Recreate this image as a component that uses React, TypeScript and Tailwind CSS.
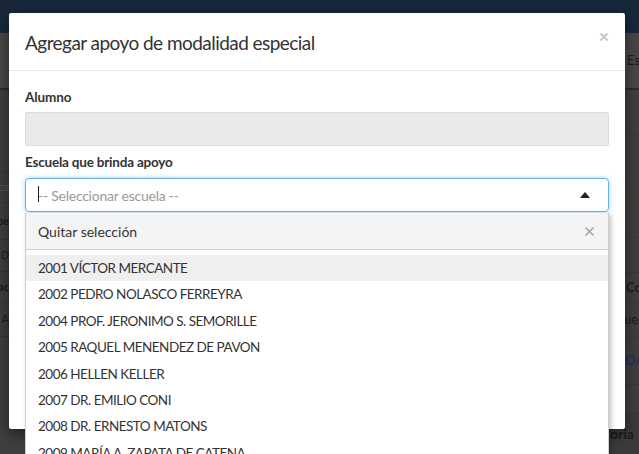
import React from "react";

const schools = [
  "2001 VÍCTOR MERCANTE",
  "2002 PEDRO NOLASCO FERREYRA",
  "2004 PROF. JERONIMO S. SEMORILLE",
  "2005 RAQUEL MENENDEZ DE PAVON",
  "2006 HELLEN KELLER",
  "2007 DR. EMILIO CONI",
  "2008 DR. ERNESTO MATONS",
  "2009 MARÍA A. ZAPATA DE CATENA",
];

export default function App() {
  return (
    <div
      className="relative w-[639px] h-[454px] overflow-hidden bg-[#3f3f3f]"
      style={{ fontFamily: "Lato, 'Liberation Sans', sans-serif" }}
    >
      {/* Background page (dimmed) */}
      <div className="flex flex-col h-full">
        <div className="h-[33px] bg-[#17283a] shrink-0" />
        <div className="flex flex-1">
          {/* left strip */}
          <div className="w-[9px] flex flex-col text-[11px] text-[#1c1c1c]">
            <div className="h-[57px] bg-[#474747] border-b-2 border-[#222c36]" />
            <div className="h-[82px] border-b border-[#383838]" />
            <div className="h-[31px] flex items-center justify-end border-b border-[#383838] text-[#5a5a5a] whitespace-nowrap">
              ca
            </div>
            <div className="h-[37px] flex items-center justify-end border-b border-[#383838] font-bold whitespace-nowrap">
              pe
            </div>
            <div className="h-[32px] flex items-center justify-end border-b border-[#383838] whitespace-nowrap">
              D
            </div>
            <div className="h-[31px] flex items-center justify-end border-b border-[#383838] font-bold whitespace-nowrap">
              ac
            </div>
            <div className="h-[34px] flex items-center justify-end border-b border-[#383838] whitespace-nowrap">
              A
            </div>
            <div className="flex-1" />
          </div>
          <div className="flex-1" />
          {/* right strip */}
          <div className="w-[29px] flex flex-col text-[13px] text-[#1c1c1c]">
            <div className="h-[57px] bg-[#474747] border-b-2 border-[#222c36] flex items-center pl-[17px] whitespace-nowrap">
              Es
            </div>
            <div className="h-[45px] border-b border-[#383838]" />
            <div className="h-[103px] border-b border-[#383838]" />
            <div className="h-[35px] border-b border-[#383838]" />
            <div className="h-[30px] flex items-center pl-[16px] font-bold border-b border-[#383838] whitespace-nowrap">
              Co
            </div>
            <div className="h-[35px] flex items-center pl-[14px] border-b border-[#383838] whitespace-nowrap">
              ue
            </div>
            <div className="h-[47px] flex items-center pl-[15px] text-[#1c2a6e] border-b border-[#383838] whitespace-nowrap">
              OA
            </div>
            <div className="h-[28px] border-b border-[#383838]" />
            <div className="flex-1 flex items-center pl-0 font-bold bg-[#3b3b3b] whitespace-nowrap text-[14px]">
              oria
            </div>
          </div>
        </div>
      </div>

      {/* Modal overlay */}
      <div className="absolute inset-0 pt-[13px] pl-[9px]">
        <div className="relative w-[616px] h-[416px] bg-white rounded-[2px] shadow-[0_5px_15px_rgba(0,0,0,0.5)]">
          <div className="h-[58px] flex items-center justify-between pl-4 pr-[16px] border-b border-[#e8e8e8]">
            <span className="text-[19px] text-[#333] leading-none pt-[2px] tracking-[-0.55px]">
              Agregar apoyo de modalidad especial
            </span>
            <svg width="10" height="10" viewBox="0 0 10 10" className="mb-[9px]">
              <path d="M1.5 1.5L8.5 8.5M8.5 1.5L1.5 8.5" stroke="#c8c8c8" strokeWidth="2" />
            </svg>
          </div>
          <div className="px-4 pt-4">
            <div className="h-[20px] flex items-center text-[13.5px] font-bold text-[#333] mb-[5px] tracking-[-0.1px]">
              Alumno
            </div>
            <div className="h-[34px] bg-[#eaeaea] border border-[#dcdcdc] rounded-[2px]" />
            <div className="h-[20px] mt-[6px] flex items-center text-[13.5px] font-bold text-[#333] mb-[6px] tracking-[-0.2px]">
              Escuela que brinda apoyo
            </div>
            <div className="relative h-[34px] flex items-center justify-between pl-[12px] pr-[18px] border border-[#6aaee8] rounded-[4px] shadow-[0_0_5px_rgba(102,175,233,0.55)]">
              <span className="relative text-[14px] text-[#9a9a9a] tracking-[-0.25px]">
                <span className="absolute left-0 top-[1px] w-px h-[16px] bg-[#222]" />
                -- Seleccionar escuela --
              </span>
              <svg width="10" height="6" viewBox="0 0 10 6">
                <path d="M0 6L5 0L10 6Z" fill="#222" />
              </svg>
            </div>
          </div>
        </div>
      </div>

      {/* Dropdown */}
      <div className="absolute left-[25px] top-[213px] w-[584px] h-[260px] bg-white border-x border-[#d0d0d0] shadow-[2px_2px_5px_rgba(0,0,0,0.25)]">
        <div className="h-[37px] bg-[#f4f4f4] border-b border-[#cccccc] flex items-center justify-between pl-[12px] pr-[14px] text-[14px] text-[#333]">
          <span>Quitar selección</span>
          <svg width="9" height="9" viewBox="0 0 9 9">
            <path d="M0.5 0.5L8.5 8.5M8.5 0.5L0.5 8.5" stroke="#9a9a9a" strokeWidth="1.2" />
          </svg>
        </div>
        <div className="pt-[5px] flex flex-col">
          {schools.map((s, i) => (
            <div
              key={s}
              className={
                "h-[26.4px] flex items-center pl-[12px] text-[13.5px] text-[#333] whitespace-nowrap tracking-[-0.5px] " +
                (i === 0 ? "bg-[#efefef]" : "")
              }
            >
              {s}
            </div>
          ))}
        </div>
      </div>
    </div>
  );
}
